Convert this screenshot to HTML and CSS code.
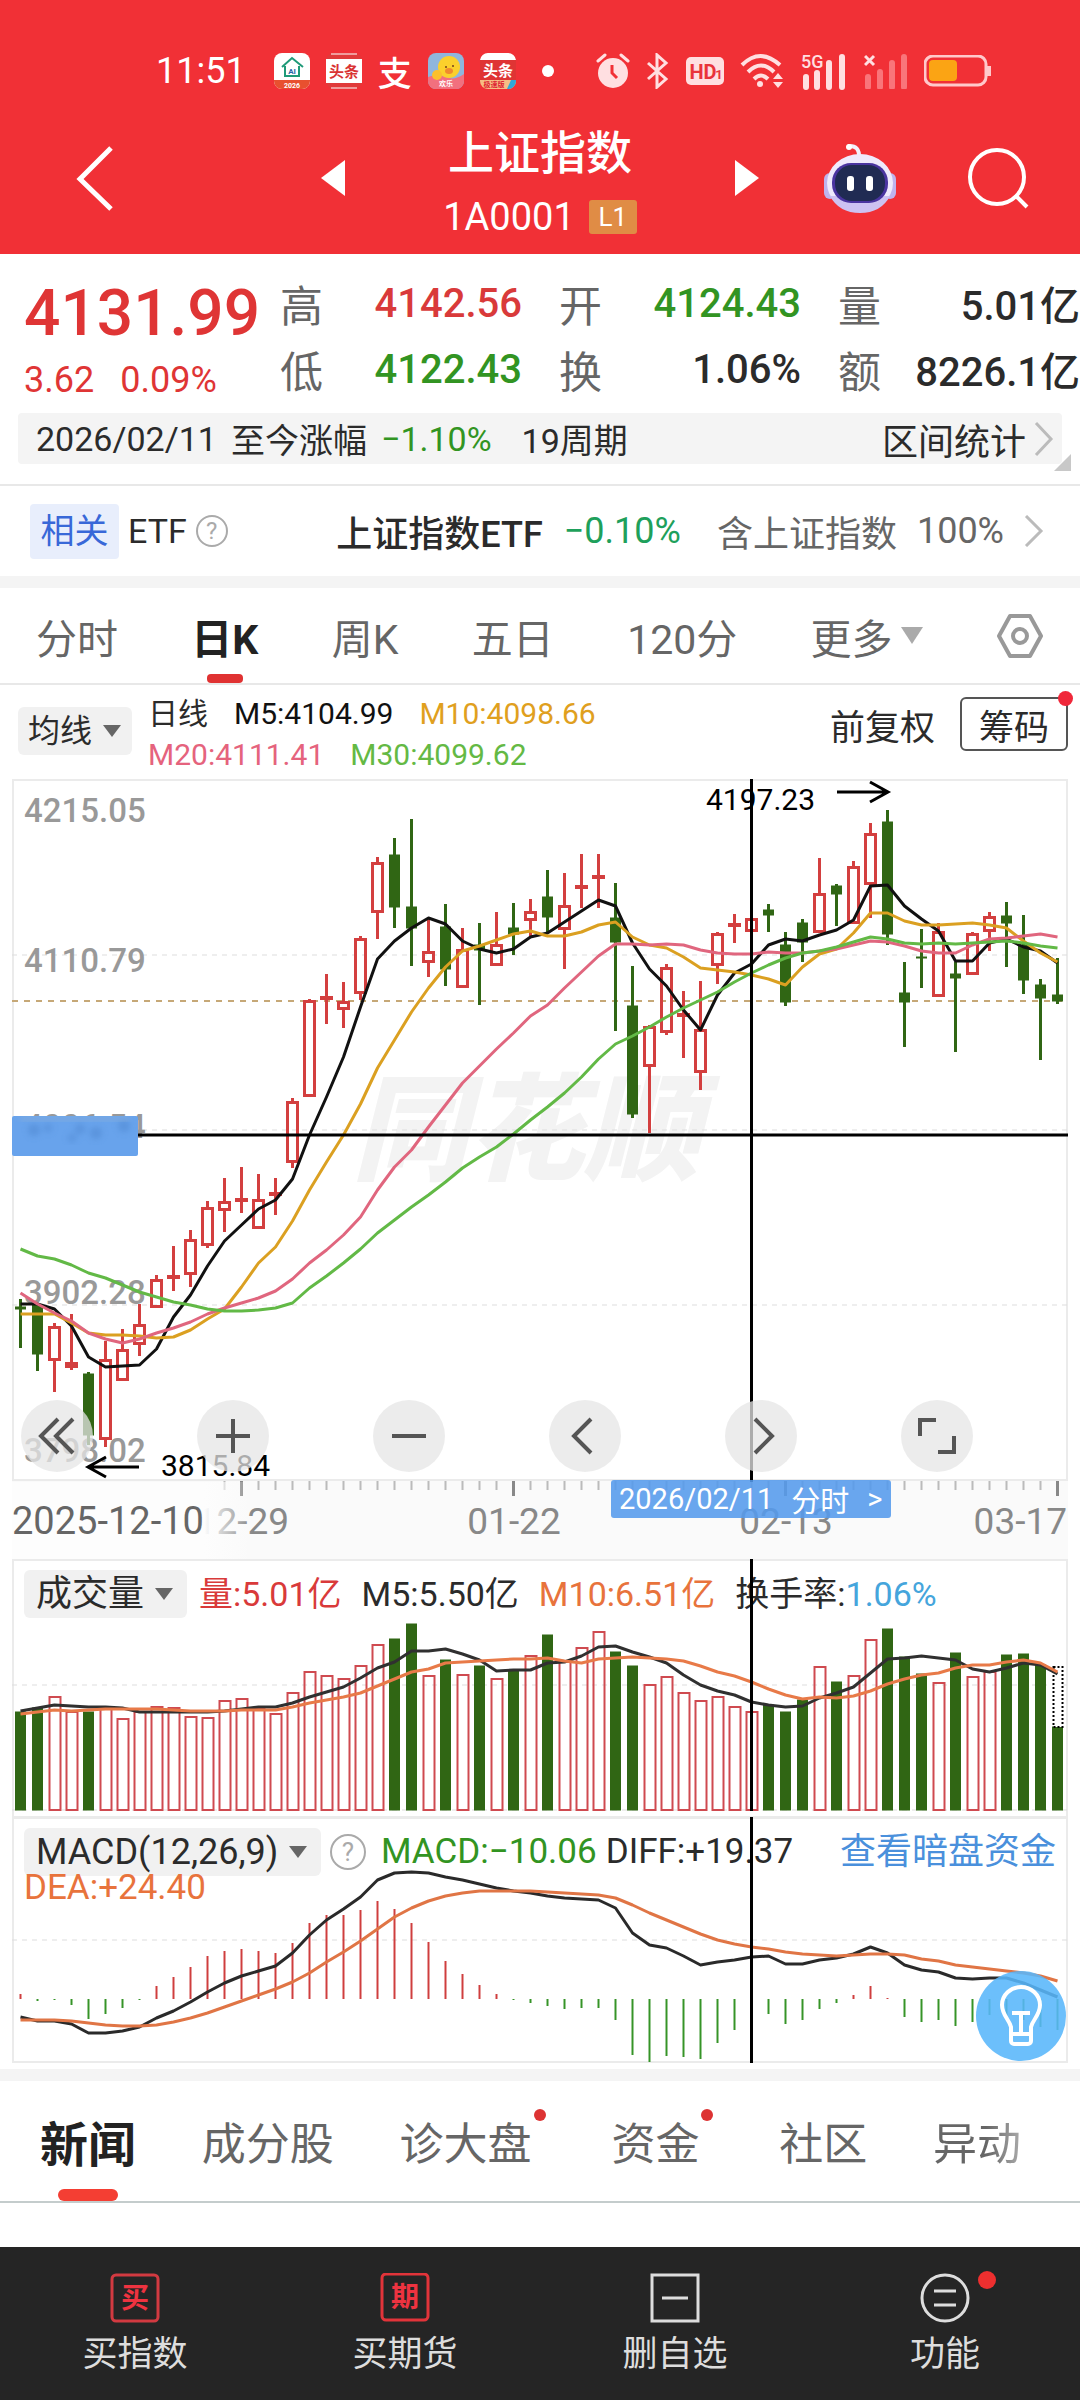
FILE: index.html
```html
<!DOCTYPE html>
<html lang="zh-CN">
<head>
  <meta charset="UTF-8">
  <meta name="viewport" content="width=device-width, initial-scale=1.0">
  <title>上证指数</title>
  <link rel="stylesheet" href="styles.css">
</head>
<body>
  <header class="top">
    <!-- Status bar -->
    <div class="status">
      <div class="status-left">
        <span class="time">11:51</span>
        <svg class="app" viewBox="0 0 36 36"><rect width="36" height="36" rx="8" fill="#fff"/><path d="M8 36h20a8 8 0 0 0 8-8v-1H0v1a8 8 0 0 0 8 8z" fill="#e8502f"/><path d="M8 14 18 5l11 9M11 13v10h14V13" fill="none" stroke="#1f9a78" stroke-width="2"/><text x="18" y="21" class="t-ai">AI</text><text x="18" y="35" class="t-tiny">2026</text></svg>
        <svg class="app" viewBox="0 0 36 36"><rect width="36" height="36" rx="8" fill="#e03a3a"/><path d="M5 1h26M5 35h26" stroke="#fff" stroke-width="1"/><rect y="6" width="36" height="24" fill="#fff"/><text x="18" y="24" class="t-tt">头条</text></svg>
        <span class="pay">支</span>
        <svg class="app" viewBox="0 0 36 36"><rect width="36" height="36" rx="8" fill="#8fb6dd"/><path d="M0 24q10-4 18 0t18-3v7a8 8 0 0 1-8 8H8a8 8 0 0 1-8-8z" fill="#f2707e"/><circle cx="21" cy="14" r="11" fill="#fbd02c"/><circle cx="9" cy="22" r="5" fill="#fbc02c"/><circle cx="18" cy="14" r="1" fill="#74401a"/><circle cx="25" cy="13" r="1" fill="#74401a"/><ellipse cx="21" cy="18" rx="4" ry="3" fill="#f08a2e"/><text x="18" y="33" class="t-tiny">欢乐</text></svg>
        <svg class="app" viewBox="0 0 36 36"><rect width="36" height="36" rx="8" fill="#df3434"/><path d="M8 0h20a8 8 0 0 1 8 7H0a8 8 0 0 1 8-7z" fill="#fff"/><text x="18" y="23" class="t-tw">头条</text><path d="M0 27h36v1a8 8 0 0 1-8 8H8a8 8 0 0 1-8-8z" fill="#f7bd84"/><path d="M27 36h1a8 8 0 0 0 8-8v-1h-5z" fill="#2fa8d8"/><text x="14" y="34" class="t-fast">极速版</text></svg>
        <i class="more-dot"></i>
      </div>
      <div class="status-right">
        <svg width="34" height="36" viewBox="0 0 34 36"><circle cx="17" cy="20" r="15" fill="#ffdfe1"/><path d="M2 8 9 2M32 8l-7-6" stroke="#ffdfe1" stroke-width="3" stroke-linecap="round"/><path d="M16 12v8l5 5" fill="none" stroke="#f13036" stroke-width="3"/></svg>
        <svg width="24" height="36" viewBox="0 0 24 36"><path d="M2 10l18 16-9 8V2l9 8L2 26" fill="none" stroke="#ffdfe1" stroke-width="3"/></svg>
        <svg width="38" height="28" viewBox="0 0 38 28"><rect width="38" height="28" rx="5" fill="#ffdfe1"/><text x="17" y="22" class="t-hd">HD</text><text x="33" y="22" class="t-hd1">1</text></svg>
        <svg width="44" height="36" viewBox="0 0 44 36"><g fill="none" stroke="#ffdfe1" stroke-width="4"><path d="M2 12q18-18 38 0"/><path d="M8 19q13-13 26 0"/><path d="M14 26q7-7 14 0"/></g><circle cx="20" cy="31" r="3" fill="#ffdfe1"/><path d="M33 26l5-6 5 6zM33 29l5 6 5-6z" fill="#ffdfe1"/></svg>
        <svg class="signal" width="48" height="36" viewBox="0 0 48 36"><text x="1" y="15" class="t-5g">5G</text><path d="M6 34V24M17 34V20M29 34V10M42 34V4" stroke="#ffdfe1" stroke-width="6" stroke-linecap="round"/></svg>
        <svg width="44" height="36" viewBox="0 0 44 36"><path d="M1 3l9 9M10 3l-9 9" stroke="#ffdfe1" stroke-width="3"/><path d="M4 34V24M16 34V19M28 34V10M40 34V4" stroke="#f9757a" stroke-width="6" stroke-linecap="round"/></svg>
        <svg width="68" height="32" viewBox="0 0 68 32"><rect x="1" y="1" width="61" height="29" rx="8" fill="none" stroke="#ffc9cb" stroke-width="3"/><rect x="5" y="5" width="28" height="21" rx="4" fill="#fba414"/><path d="M65 11v10" stroke="#ffc9cb" stroke-width="4"/></svg>
      </div>
    </div>
    <!-- Title bar -->
    <div class="titlebar">
      <button class="icon-btn" aria-label="返回"><svg width="44" height="68" viewBox="0 0 44 68"><path d="M37 4 6 35l31 30" fill="none" stroke="#fff" stroke-width="5"/></svg></button>
      <button class="icon-btn" aria-label="上一只"><svg width="24" height="36" viewBox="0 0 24 36"><path d="M24 0v36L0 18z" fill="#fff"/></svg></button>
      <div class="title">
        <h1>上证指数</h1>
        <div class="code">1A0001<span class="level">L1</span></div>
      </div>
      <button class="icon-btn" aria-label="下一只"><svg width="24" height="36" viewBox="0 0 24 36"><path d="M0 0v36l24-18z" fill="#fff"/></svg></button>
      <button class="icon-btn" aria-label="智能助手">
        <svg width="74" height="70" viewBox="0 0 74 70">
          <path d="M25 3q12-1 11 12" fill="none" stroke="#f3f0fb" stroke-width="4"/><circle cx="26" cy="4" r="3" fill="#fff"/>
          <rect x="1" y="30" width="12" height="26" rx="6" fill="#bfb3ee"/><rect x="61" y="30" width="12" height="26" rx="6" fill="#bfb3ee"/>
          <ellipse cx="37" cy="40" rx="33" ry="29" fill="#efeafc"/><path d="M7 53q9 17 30 17t30-17z" fill="#cdc2f2"/>
          <rect x="9" y="20" width="56" height="40" rx="19" fill="#4a34a0"/><rect x="12" y="22" width="50" height="36" rx="17" fill="#202b53"/>
          <rect x="24" y="33" width="7" height="15" rx="3" fill="#fff"/><rect x="43" y="33" width="7" height="15" rx="3" fill="#fff"/>
        </svg>
      </button>
      <button class="icon-btn" aria-label="搜索"><svg width="64" height="64" viewBox="0 0 64 64"><circle cx="31" cy="31" r="27" fill="none" stroke="#fff" stroke-width="4"/><path d="M50 50l11 11" stroke="#fff" stroke-width="4"/></svg></button>
    </div>
  </header>

  <!-- Quote -->
  <section class="quote">
    <div class="last">
      <strong>4131.99</strong>
      <div class="chg"><span>3.62</span><span>0.09%</span></div>
    </div>
    <dl class="stats">
      <div><dt>高</dt><dd class="red">4142.56</dd></div>
      <div><dt>开</dt><dd class="green">4124.43</dd></div>
      <div><dt>量</dt><dd>5.01亿</dd></div>
      <div><dt>低</dt><dd class="green">4122.43</dd></div>
      <div><dt>换</dt><dd>1.06%</dd></div>
      <div><dt>额</dt><dd>8226.1亿</dd></div>
    </dl>
  </section>
  <div class="range-wrap">
    <a class="range" href="#range">
      <span>2026/02/11</span><span>至今涨幅</span><span class="green">−1.10%</span><span class="cycles">19周期</span>
      <span class="range-link">区间统计</span>
      <svg width="20" height="36" viewBox="0 0 20 36"><path d="M2 2l15 16L2 34" fill="none" stroke="#bbb" stroke-width="3"/></svg>
    </a>
  </div>
  <a class="etf" href="#etf">
    <span class="tag">相关</span>
    <span class="etf-label">ETF</span>
    <i class="help">?</i>
    <span class="etf-name">上证指数ETF</span>
    <span class="etf-chg">−0.10%</span>
    <span class="etf-note">含上证指数</span>
    <span class="etf-note">100%</span>
    <svg width="20" height="32" viewBox="0 0 20 32"><path d="M2 1l15 15L2 31" fill="none" stroke="#bbb" stroke-width="3"/></svg>
  </a>

  <!-- Period tabs -->
  <nav class="periods">
    <button>分时</button>
    <button class="active">日K</button>
    <button>周K</button>
    <button>五日</button>
    <button>120分</button>
    <button class="more">更多<i class="caret"></i></button>
    <button aria-label="设置"><svg width="48" height="46" viewBox="0 0 48 46"><path d="M14 3h20l11 20-11 20H14L3 23z" fill="none" stroke="#999" stroke-width="4" stroke-linejoin="round"/><circle cx="24" cy="23" r="7" fill="none" stroke="#999" stroke-width="4"/></svg></button>
  </nav>

  <!-- Moving averages -->
  <section class="ma">
    <label class="picker ma-picker"><select aria-label="均线"><option>均线</option></select></label>
    <div class="ma-values">
      <div><span>日线</span><span class="black">M5:4104.99</span><span class="gold">M10:4098.66</span></div>
      <div><span class="pink">M20:4111.41</span><span class="lime">M30:4099.62</span></div>
    </div>
    <button class="adjust">前复权</button>
    <button class="chips">筹码<i class="badge"></i></button>
  </section>

  <!-- Charts -->
  <main class="charts">
    <section class="panel">
      <svg class="plot" id="price" viewBox="0 -1 1056 780"></svg>
      <div class="tools">
        <button aria-label="更早"><svg width="40" height="40" viewBox="0 0 40 40"><path d="M21 3 4 20l17 17M36 3 19 20l17 17"/></svg></button>
        <button aria-label="放大"><svg width="40" height="40" viewBox="0 0 40 40"><path d="M20 3v34M3 20h34"/></svg></button>
        <button aria-label="缩小"><svg width="40" height="40" viewBox="0 0 40 40"><path d="M3 20h34"/></svg></button>
        <button aria-label="左移"><svg width="40" height="40" viewBox="0 0 40 40"><path d="M26 3 9 20l17 17"/></svg></button>
        <button aria-label="右移"><svg width="40" height="40" viewBox="0 0 40 40"><path d="M14 3l17 17-17 17"/></svg></button>
        <button aria-label="全屏"><svg width="40" height="40" viewBox="0 0 40 40"><path d="M3 20V4h16M37 20v16H21"/></svg></button>
      </div>
      <button class="day-tip"><span>2026/02/11</span><span>分时</span><span>&gt;</span></button>
    </section>

    <section class="panel">
      <div class="legend vol">
        <label class="picker"><select aria-label="成交量"><option>成交量</option></select></label>
        <span class="red">量:5.01亿</span><span>M5:5.50亿</span><span class="orange">M10:6.51亿</span>
        <span>换手率:<b class="sky">1.06%</b></span>
      </div>
      <svg class="plot" id="volume" viewBox="0 -1 1056 258"></svg>
    </section>

    <section class="panel">
      <div class="legend macd">
        <label class="picker"><select aria-label="指标"><option>MACD(12,26,9)</option></select></label>
        <i class="help">?</i>
        <span class="green">MACD:−10.06</span><span>DIFF:+19.37</span>
        <a href="#flow">查看暗盘资金</a>
      </div>
      <div class="dea orange">DEA:+24.40</div>
      <svg class="plot" id="macd" viewBox="0 0 1056 246"></svg>
      <button class="lamp" aria-label="解读"><svg width="44" height="62" viewBox="0 0 44 62"><path d="M12 42C10 34 3 30 3 20a19 18 0 0 1 38 0c0 10-7 14-9 22v14a3 3 0 0 1-3 3H15a3 3 0 0 1-3-3zM12 49h20M13 28h18M22 28v20"/></svg></button>
    </section>
  </main>

  <!-- News tabs -->
  <nav class="news">
    <a class="active" href="#news">新闻</a>
    <a href="#members">成分股</a>
    <a class="dot" href="#diagnose">诊大盘</a>
    <a class="dot" href="#funds">资金</a>
    <a href="#community">社区</a>
    <a class="fade" href="#moves">异动</a>
  </nav>

  <!-- Bottom bar -->
  <footer class="bottom">
    <button><svg width="50" height="50" viewBox="0 0 50 50"><rect x="2" y="2" width="46" height="46" rx="4" fill="none" stroke="#d23a41" stroke-width="3"/><text x="25" y="35" class="t-nav">买</text></svg>买指数</button>
    <button><svg width="50" height="50" viewBox="0 0 50 50"><rect x="2" y="1" width="46" height="46" rx="4" fill="none" stroke="#e2343a" stroke-width="3"/><text x="25" y="34" class="t-nav">期</text></svg>买期货</button>
    <button><svg width="50" height="50" viewBox="0 0 50 50"><path d="M2 2h46v46H2zM12 25h26" fill="none" stroke="#ddd" stroke-width="3"/></svg>删自选</button>
    <button><svg width="50" height="50" viewBox="0 0 50 50"><circle cx="25" cy="25" r="23" fill="none" stroke="#ddd" stroke-width="3"/><path d="M14 18h22M14 32h22" stroke="#ddd" stroke-width="3"/></svg>功能<i class="badge"></i></button>
  </footer>

  <script src="script.js"></script>
</body>
</html>
```

FILE: styles.css
```css
* {
  box-sizing: border-box;
}
body {
  margin: 0;
  background: #fff;
  color: #2b2b2b;
  font-family: Roboto, "Noto Sans CJK SC", sans-serif;
  font-size: 36px;
}
button {
  padding: 0;
  border: none;
  background: none;
  color: inherit;
  font: inherit;
  cursor: pointer;
}
a {
  color: inherit;
  text-decoration: none;
}
svg {
  display: block;
}
.red { color: #d93a3a; }
.green { color: #329422; }
.black { color: #111; }
.gold { color: #e0a01e; }
.pink { color: #e5637d; }
.lime { color: #64b944; }
.orange { color: #e8733c; }
.sky { color: #45a5dc; }

/* Header */
.top {
  height: 254px;
  padding-top: 44px;
  background: #f13036;
  color: #fff;
}
.status {
  display: flex;
  justify-content: space-between;
  align-items: center;
  height: 54px;
  padding: 0 88px 0 156px;
}
.status-left, .status-right {
  display: flex;
  align-items: center;
  gap: 16px;
}
.time {
  margin-right: 12px;
}
.app {
  width: 36px;
  height: 36px;
}
.pay {
  width: 34px;
  font-size: 34px;
  font-weight: 500;
}
.more-dot {
  width: 12px;
  height: 12px;
  margin-left: 10px;
  border-radius: 50%;
  background: #fff;
}
.signal {
  overflow: visible;
}
.t-ai, .t-tt, .t-tw, .t-tiny, .t-fast, .t-hd, .t-hd1, .t-nav {
  font-weight: 700;
  text-anchor: middle;
}
.t-ai { font-size: 8px; fill: #2766a8; }
.t-tt { font-size: 15px; fill: #d93333; }
.t-tw { font-size: 15px; fill: #fff; }
.t-tiny { font-size: 7px; fill: #fff; }
.t-fast { font-size: 7px; fill: #d23; }
.t-hd { font-size: 20px; fill: #e9333a; }
.t-hd1 { font-size: 13px; fill: #e9333a; }
.t-5g { font-size: 18px; font-weight: 500; fill: #ffdfe1; }
.t-nav { font-size: 28px; fill: #ee3340; }
.titlebar {
  display: grid;
  grid-template-columns: 307px 24px 390px 24px 1fr 116px;
  align-items: center;
  height: 156px;
  padding: 4px 14px 0;
}
.icon-btn:first-child {
  padding-left: 60px;
}
.icon-btn:nth-child(5) {
  justify-self: end;
  padding-right: 53px;
}
.icon-btn:last-child {
  padding-left: 16px;
}
.title {
  padding-top: 10px;
  text-align: center;
}
.title h1 {
  margin: 0;
  font-size: 46px;
  font-weight: 500;
  line-height: 68px;
}
.code {
  display: flex;
  justify-content: center;
  align-items: center;
  gap: 14px;
  height: 60px;
  font-size: 38px;
}
.level {
  width: 48px;
  border-radius: 3px;
  background: #e08c45;
  font-size: 26px;
  line-height: 34px;
}

/* Quote */
.quote {
  display: flex;
  height: 159px;
  padding: 14px 0 0 24px;
}
.last {
  width: 256px;
  color: #df3535;
}
.last strong {
  display: block;
  font-size: 64px;
  font-weight: 500;
  line-height: 92px;
}
.chg {
  display: flex;
  gap: 26px;
  font-size: 36px;
  line-height: 40px;
}
.stats {
  display: grid;
  flex: 1;
  grid-template-columns: repeat(3, 1fr);
  grid-auto-rows: 66px;
  column-gap: 37px;
  margin: 2px 0 0;
}
.stats div {
  display: flex;
  justify-content: space-between;
  align-items: center;
  white-space: nowrap;
}
.stats dt {
  color: #666;
  font-size: 43px;
}
.stats dd {
  margin: 0;
  font-size: 40px;
  font-weight: 500;
}
.range-wrap {
  position: relative;
  height: 73px;
  padding: 0 18px;
  border-bottom: 2px solid #e8e8e8;
}
.range-wrap::after {
  content: "";
  position: absolute;
  right: 9px;
  bottom: 13px;
  border-left: 17px solid transparent;
  border-bottom: 17px solid #c8c8c8;
}
.range {
  display: flex;
  align-items: center;
  gap: 14px;
  height: 51px;
  padding: 0 8px 0 18px;
  border-radius: 4px;
  background: #f4f4f4;
  font-size: 34px;
}
.cycles {
  margin-left: 16px;
}
.range-link {
  margin-left: auto;
  font-size: 36px;
}
.range .range-link + svg {
  margin-left: -6px;
}
.etf {
  display: flex;
  align-items: center;
  height: 90px;
  padding: 0 36px 0 30px;
}
.tag {
  width: 89px;
  border-radius: 4px;
  background: #e8eefc;
  color: #3868d8;
  font-size: 34px;
  line-height: 55px;
  text-align: center;
}
.etf-label {
  margin: 0 9px;
  font-size: 34px;
}
.help {
  width: 32px;
  height: 32px;
  border: 2px solid #aaa;
  border-radius: 50%;
  color: #aaa;
  font-size: 24px;
  font-style: normal;
  line-height: 28px;
  text-align: center;
}
.etf-name {
  margin-left: auto;
  font-weight: 500;
}
.etf-chg {
  margin: 0 36px 0 21px;
  color: #1ea05b;
}
.etf-note {
  margin-right: 20px;
  color: #666;
}

/* Period tabs */
.periods {
  display: flex;
  justify-content: space-between;
  align-items: center;
  height: 109px;
  padding: 0 36px;
  border-top: 12px solid #f4f4f4;
  border-bottom: 2px solid #e8e8e8;
  color: #666;
  font-size: 41px;
}
.periods button {
  height: 95px;
}
.periods .active {
  position: relative;
  color: #222;
  font-weight: 700;
}
.periods .active::after {
  content: "";
  position: absolute;
  bottom: 0;
  left: calc(50% - 18px);
  width: 36px;
  height: 9px;
  border-radius: 4px;
  background: #e03232;
}
.periods .more {
  display: flex;
  align-items: center;
  gap: 8px;
}
.caret {
  border: 11px solid transparent;
  border-top: 17px solid #aaa;
  border-bottom: none;
}

/* Moving average bar */
.ma {
  display: flex;
  height: 94px;
  padding: 8px 12px 0 18px;
}
.picker {
  position: relative;
  display: block;
  height: 48px;
}
.picker select {
  height: 100%;
  padding: 0 42px 0 12px;
  border: none;
  border-radius: 6px;
  background: #f1f1f1;
  color: #2b2b2b;
  font: inherit;
  appearance: none;
}
.picker::after {
  content: "";
  position: absolute;
  top: 18px;
  right: 14px;
  border: 9px solid transparent;
  border-top: 12px solid #666;
  border-bottom: none;
}
.ma-picker {
  margin-top: 14px;
}
.ma-picker select {
  padding: 0 39px 0 10px;
  font-size: 32px;
}
.ma-picker::after {
  right: 11px;
}
.ma-values {
  margin-left: 16px;
  font-size: 30px;
  line-height: 41px;
}
.ma-values div {
  display: flex;
  gap: 26px;
}
.adjust, .chips {
  height: 54px;
  margin-top: 4px;
  font-size: 35px;
}
.adjust {
  margin-left: auto;
}
.chips {
  position: relative;
  width: 108px;
  margin-left: 25px;
  border: 2px solid #555;
  border-radius: 6px;
}
.badge {
  position: absolute;
  top: -8px;
  right: -7px;
  width: 15px;
  height: 15px;
  border-radius: 50%;
  background: #f0283a;
}

/* Charts */
.charts {
  padding: 0 12px 6px;
}
.panel {
  position: relative;
}
.plot {
  position: relative;
  width: 100%;
  height: auto;
  overflow: visible;
  pointer-events: none;
}
.frame { fill: none; stroke: #ebebeb; stroke-width: 2; }
.grid { stroke: #ddd; stroke-width: 1; stroke-dasharray: 5 5; }
.guide { stroke: #c6a877; stroke-width: 2; stroke-dasharray: 6 6; }
.cross { fill: none; stroke: #000; stroke-width: 3; }
.line { fill: none; stroke-width: 3; stroke-linejoin: round; }
.up { fill: none; stroke: #d33f3f; stroke-width: 3; }
.up-vol { fill: none; stroke: #cf4a50; stroke-width: 2; }
.down { fill: #306614; stroke: #306614; }
.ghost { fill: #fff; stroke: #000; stroke-width: 2; stroke-dasharray: 2 2; }
.axis { fill: #999; font-size: 33px; font-weight: 500; }
.dates { fill: #888; font-size: 37px; }
.dates-first { fill: #666; font-size: 38px; }
.mark { fill: #000; font-size: 30px; }
.watermark {
  fill: #f3f3f3;
  font-size: 116px;
  font-style: italic;
  font-weight: 900;
}
.tools {
  position: absolute;
  right: 0;
  bottom: 87px;
  left: 0;
  display: grid;
  grid-template-columns: repeat(6, 1fr);
}
.tools button {
  display: grid;
  place-items: center;
  width: 72px;
  height: 72px;
  margin-left: 9px;
  border-radius: 50%;
  background: rgba(230, 230, 230, 0.75);
}
.tools svg {
  fill: none;
  stroke: #555;
  stroke-width: 4;
}
.day-tip {
  position: absolute;
  bottom: 41px;
  left: 56.7%;
  display: flex;
  justify-content: center;
  align-items: center;
  gap: 18px;
  width: 280px;
  height: 38px;
  border-radius: 3px;
  background: rgba(84, 154, 236, 0.88);
  color: #fff;
  font-size: 29px;
}
.legend {
  position: absolute;
  top: 11px;
  right: 12px;
  left: 12px;
  display: flex;
  align-items: center;
  gap: 20px;
  font-size: 34px;
  line-height: 46px;
  white-space: nowrap;
}
.legend b {
  font-weight: 400;
}
.legend .picker {
  font-size: 36px;
}
.legend.vol .picker {
  margin-right: -8px;
}
.legend.macd {
  gap: 9px;
  font-size: 35px;
}
.legend .help {
  width: 36px;
  height: 36px;
  margin-right: 6px;
  font-size: 26px;
  line-height: 32px;
}
.legend a {
  margin-left: auto;
  color: #4a90dc;
  font-size: 36px;
}
.dea {
  position: absolute;
  top: 50px;
  left: 12px;
  font-size: 35px;
}
.lamp {
  position: absolute;
  right: 2px;
  bottom: 2px;
  display: grid;
  place-items: center;
  width: 90px;
  height: 90px;
  border-radius: 50%;
  background: rgba(88, 182, 250, 0.88);
}
.lamp svg {
  fill: none;
  stroke: #fff;
  stroke-width: 4;
}

/* News tabs */
.news {
  display: flex;
  justify-content: space-between;
  align-items: center;
  height: 134px;
  padding: 0 59px 0 40px;
  border-top: 12px solid #f4f4f4;
  border-bottom: 2px solid #c4cccc;
  color: #666;
  font-size: 44px;
}
.news a {
  display: flex;
  align-items: center;
  height: 120px;
}
.news .active {
  position: relative;
  color: #222;
  font-size: 48px;
  font-weight: 700;
}
.news .active::after {
  content: "";
  position: absolute;
  bottom: 0;
  left: calc(50% - 30px);
  width: 60px;
  height: 12px;
  border-radius: 6px;
  background: #f43e33;
}
.news .dot::after {
  content: "";
  width: 12px;
  height: 12px;
  margin: 0 0 52px 2px;
  border-radius: 50%;
  background: #d33;
}
.news .fade {
  background: linear-gradient(90deg, #666 60%, #aaa);
  background-clip: text;
  color: transparent;
}

/* Bottom bar */
.bottom {
  display: grid;
  grid-template-columns: repeat(4, 1fr);
  height: 153px;
  margin-top: 44px;
  background: #252525;
  color: #ddd;
  font-size: 35px;
}
.bottom button {
  position: relative;
  display: flex;
  flex-direction: column;
  align-items: center;
  gap: 6px;
  padding-top: 26px;
  line-height: 52px;
}
.bottom .badge {
  top: 24px;
  right: 84px;
  width: 18px;
  height: 18px;
  background: #ee2f2f;
}
```

FILE: script.js
```js
// [type, high, body top, body bottom, low] measured down from the top of the price panel
const candles = [
  ['d',519,527,529,568], ['d',524,525,574,591], ['u',543,546,581,612], ['u',534,582,588,590],
  ['d',592,594,655,665], ['u',561,579,660,667], ['u',549,569,601,601], ['u',524,544,565,576],
  ['u',495,499,528,528], ['u',466,495,497,511], ['u',450,459,495,507], ['u',421,427,466,468],
  ['u',398,421,431,452], ['u',387,418,420,433], ['u',394,419,449,449], ['u',398,412,414,435],
  ['u',318,321,383,388], ['u',219,220,317,317], ['u',194,216,219,244], ['u',202,221,230,248],
  ['u',156,158,214,220], ['u',77,82,133,159], ['d',58,75,127,148], ['d',39,127,148,186],
  ['u',138,171,183,197], ['d',124,147,189,206], ['u',148,169,208,208], ['d',143,165,170,225],
  ['u',132,164,186,186], ['d',123,148,154,175], ['u',119,131,141,157], ['d',90,117,137,153],
  ['u',93,125,150,189], ['u',74,105,109,128], ['u',74,95,99,128], ['d',103,138,162,251],
  ['d',186,226,334,338], ['u',245,246,287,353], ['u',184,187,253,255], ['u',211,233,234,278],
  ['u',201,249,293,310], ['u',152,153,186,204], ['u',134,143,145,163], ['u',132,138,152,153],
  ['d',124,130,135,152], ['d',152,165,222,226], ['d',139,143,162,182], ['u',78,113,153,153],
  ['d',104,106,114,146], ['u',81,86,144,144], ['u',43,53,105,138], ['d',30,42,154,165],
  ['d',182,213,222,267], ['d',149,177,178,208], ['u',143,151,217,217], ['d',182,194,198,272],
  ['u',152,153,195,195], ['u',132,136,152,171], ['d',122,136,143,187], ['d',135,165,200,214],
  ['d',199,205,218,280], ['d',178,215,221,224]
];

const ma5 = [524,524,529,546,577,587,586,585,569,537,515,486,461,445,429,420,399,355,317,277,227,179,161,148,138,144,161,169,173,169,157,153,142,131,120,126,163,189,206,230,250,215,193,184,165,159,161,155,150,140,106,105,126,139,151,181,181,163,159,167,171,183];
const ma10 = [534,534,534,543,553,555,555,556,558,557,550,539,529,507,483,467,441,410,382,355,324,288,260,232,208,187,171,166,160,154,151,156,156,152,145,142,157,165,168,177,188,190,192,195,199,205,187,174,169,153,133,133,141,145,145,144,143,145,148,161,173,182];
const ma20 = [513,524,533,541,553,559,563,559,553,548,542,534,528,523,518,511,499,483,470,455,437,410,387,370,347,325,303,286,269,253,236,225,208,192,176,164,164,165,164,165,170,173,174,174,172,173,173,171,169,165,161,162,166,171,173,173,165,159,158,156,154,157];
const ma30 = [469,476,479,485,493,498,505,512,517,522,525,529,531,531,530,528,523,508,496,483,469,453,440,427,415,402,388,377,367,354,340,327,313,297,279,264,256,247,237,228,220,212,202,193,185,178,173,171,167,162,157,159,163,164,163,164,163,162,161,163,166,168];

const volumes = [152,148,137,152,152,149,159,152,147,148,157,158,141,139,148,154,133,112,116,119,106,85,79,64,116,100,115,106,119,110,96,75,102,88,72,92,106,125,117,133,141,137,147,152,145,152,140,107,122,116,80,69,97,114,123,93,117,112,95,94,105,167];
const vol5 = [151,148,145,146,147,147,148,152,152,152,152,152,151,149,147,147,143,137,132,127,118,108,102,91,91,89,94,100,111,110,110,103,102,96,87,86,92,97,103,115,125,131,135,142,145,147,146,138,133,127,113,99,98,96,98,100,109,112,108,103,105,114];
const vol10 = [154,152,150,151,150,149,149,149,149,150,151,151,151,150,150,150,147,143,140,137,133,126,119,112,109,103,102,101,100,99,99,98,101,103,99,98,97,98,99,101,106,112,116,122,129,135,139,137,138,136,131,124,119,115,113,108,105,105,102,100,103,112];

const macdBars = [177,184,183,188,202,197,191,183,169,160,150,139,134,132,134,136,126,106,98,98,93,84,92,106,125,144,157,168,177,183,186,189,192,191,191,203,238,245,239,240,242,226,213,206,197,207,203,192,186,178,169,181,200,205,203,209,205,198,201,203,210,213];
const diff = [200,204,204,207,216,216,214,210,201,194,185,175,166,159,154,149,136,118,103,92,80,63,56,55,56,60,63,67,71,74,76,79,81,82,83,91,116,128,131,139,148,145,143,140,139,147,147,143,141,137,130,136,148,153,155,161,162,161,161,166,173,180];
const dea = [203,203,203,204,206,208,209,209,208,205,201,196,190,184,178,172,165,156,145,135,124,112,100,91,84,79,76,74,74,74,74,75,76,77,78,81,88,96,103,110,117,123,127,130,132,135,137,138,139,138,137,137,138,142,144,148,150,152,154,156,159,164];

const W = 1056;
const ZERO = 182;   // MACD zero line
const PICKED = 43;  // day under the crosshair
const x = i => 8.5 + 17 * i;

function line(values, color) {
  const points = values.map((v, i) => `${x(i)},${v}`).join(' ');
  return `<polyline class="line" points="${points}" stroke="${color}"/>`;
}

function grid(ys) {
  return ys.map(y => `<path class="grid" d="M0 ${y}H${W}"/>`).join('');
}

function drawPrice() {
  let s = '<defs><linearGradient id="fade"><stop offset="0.8" stop-color="#fdfdfd"/><stop offset="1" stop-color="#fdfdfd" stop-opacity="0"/></linearGradient>';
  s += '<filter id="soft"><feGaussianBlur stdDeviation="3"/></filter></defs>';
  s += `<rect y="701" width="${W}" height="78" fill="#fafafa"/>`;
  s += `<rect class="frame" x="1" y="0" width="${W - 2}" height="700"/>`;
  s += '<text class="watermark" x="340" y="391">同花顺</text>';
  s += grid([175, 350, 525]);
  s += `<path class="guide" d="M0 221H${W}"/>`;
  [['4215.05', 42], ['4110.79', 192], ['4006.54', 358], ['3902.28', 524], ['3798.02', 682]].forEach(([t, y]) => {
    s += `<text class="axis" x="12" y="${y}">${t}</text>`;
  });

  candles.forEach(([type, high, top, bottom, low], i) => {
    const c = x(i);
    if (type === 'u') {
      const h = Math.max(bottom - top - 3, 1);
      s += `<path class="up" d="M${c} ${high}V${top}M${c} ${bottom}V${low}"/>`;
      s += `<rect class="up" x="${c - 5}" y="${top + 1.5}" width="10" height="${h}"/>`;
    } else {
      s += `<rect class="down" x="${c - 5}" y="${top}" width="10" height="${bottom - top}"/>`;
      s += `<path class="down" stroke-width="3" d="M${c} ${high}V${low}"/>`;
    }
  });
  s += line(ma5, '#111') + line(ma10, '#dba021') + line(ma20, '#e0667e') + line(ma30, '#62b946');

  // highest and lowest marks
  s += '<text class="mark" x="694" y="30">4197.23</text><path class="cross" d="M825 12h51m-18-10l18 10-18 10"/>';
  s += '<text class="mark" x="149" y="696">3815.84</text><path class="cross" d="M127 687H76m18-10l-18 10 18 10"/>';

  // date axis
  for (let i = 12; i < 62; i++) {
    const long = (i - 13) % 16 === 0;
    s += `<path d="M${x(i)} 701v${long ? 15 : 9}" stroke="${long ? '#888' : '#bbb'}" stroke-width="${long ? 3 : 2}"/>`;
  }
  s += '<text class="dates" x="277" y="754" text-anchor="end">12-29</text>';
  s += '<rect y="702" width="240" height="77" fill="url(#fade)"/>';
  s += '<text class="dates-first" x="0" y="754">2025-12-10</text>';
  s += '<text class="dates" x="502" y="754" text-anchor="middle">01-22</text>';
  s += '<text class="dates" x="774" y="754" text-anchor="middle">02-13</text>';
  s += `<text class="dates" x="${W - 1}" y="754" text-anchor="end">03-17</text>`;

  // crosshair and its price tag
  s += `<path class="cross" d="M0 355H${W}M${x(PICKED)} -1V702"/>`;
  s += '<rect y="336" width="126" height="40" rx="2" fill="#68a3ec"/>';
  s += '<g filter="url(#soft)" fill="#5088d0" opacity="0.6"><circle cx="22" cy="350" r="6"/><circle cx="36" cy="348" r="4"/><circle cx="68" cy="349" r="5"/><circle cx="84" cy="353" r="6"/><circle cx="60" cy="358" r="4"/><circle cx="112" cy="346" r="6"/></g>';
  s += '<rect x="8" y="337" width="110" height="4" fill="#8fb0d6" opacity="0.7" filter="url(#soft)"/>';
  document.getElementById('price').innerHTML = s;
}

function drawVolume() {
  let s = `<rect class="frame" x="1" y="0" width="${W - 2}" height="257"/>` + grid([125, 250]);
  volumes.forEach((top, i) => {
    if (candles[i][0] === 'u') {
      s += `<rect class="up-vol" x="${x(i) - 5}" y="${top}" width="11" height="${250 - top}"/>`;
    } else {
      s += `<rect class="down" x="${x(i) - 5}" y="${top}" width="10" height="${250 - top}"/>`;
    }
  });
  // estimated volume for the unfinished day
  s += `<rect class="ghost" x="${x(61) - 4}" y="107" width="9" height="60"/>`;
  s += line(vol5, '#303030') + line(vol10, '#e87a48');
  s += `<path class="cross" d="M${x(PICKED)} -1V251"/>`;
  document.getElementById('volume').innerHTML = s;
}

function drawMacd() {
  let s = `<rect class="frame" x="1" y="1" width="${W - 2}" height="244"/>` + grid([123]);
  macdBars.forEach((y, i) => {
    s += `<path d="M${x(i)} ${ZERO}V${y}" stroke="${y < ZERO ? '#cf3e3e' : '#369428'}" stroke-width="2"/>`;
  });
  s += line(diff, '#2a2a2a') + line(dea, '#e07545');
  s += `<path class="cross" d="M${x(PICKED)} 0V246"/>`;
  document.getElementById('macd').innerHTML = s;
}

drawPrice();
drawVolume();
drawMacd();
```
